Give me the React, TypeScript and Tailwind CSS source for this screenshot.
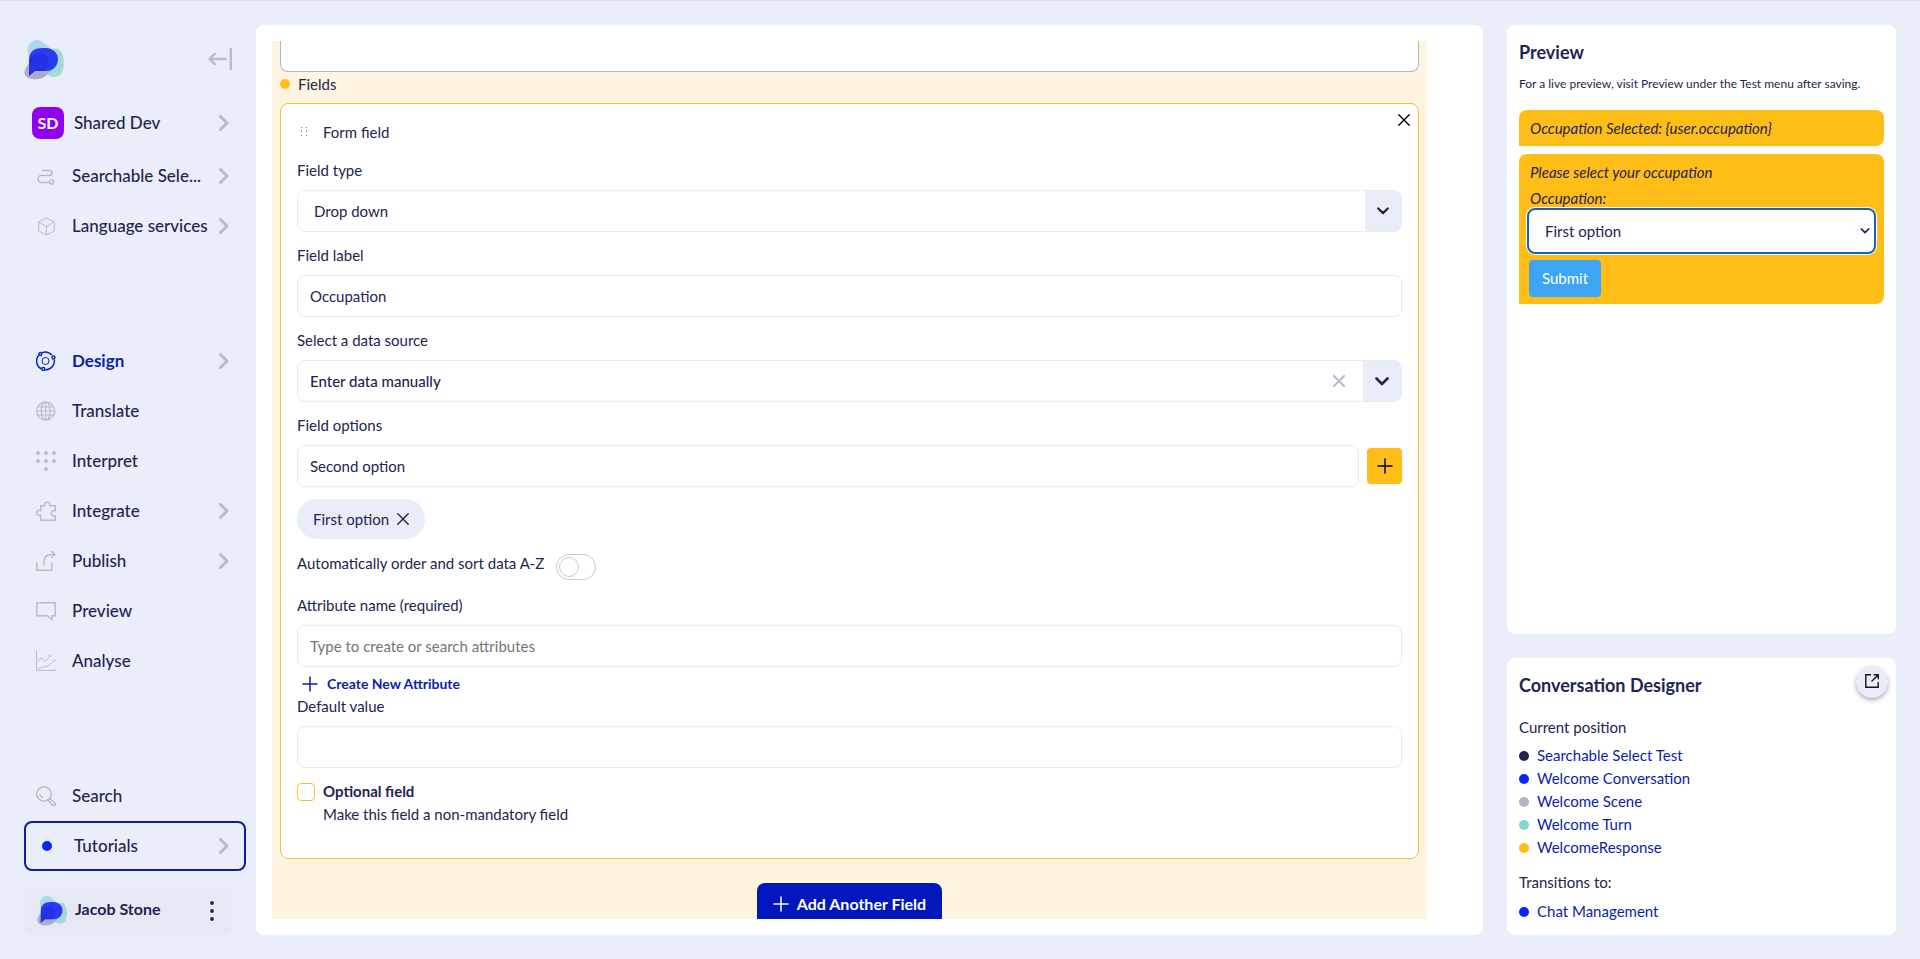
import React from "react";

type IconProps = { className?: string };

const Logo = ({ className }: IconProps) => (
  <svg viewBox="0 0 40 40" className={className} aria-hidden="true">
    <path d="M4 13C3 5 7 0 13 0c6 0 8 5 13 8 3 3 2 9-2 13-5 5-18 3-20-8z" fill="#a9d7f4" />
    <path d="M25 13c3-6 10-6 13 0 3 7 2 17-1 21-4 5-12 3-15-1-3-5-1-13 3-20z" fill="#a5d9d8" />
    <path d="M3 26c4-6 14-7 20-4 5 3 4 9 0 13-5 5-17 6-21 1-3-3-1-7 1-10z" fill="#adadc8" />
    <path d="M22 21c4-1 7 3 6 10l-6 1-2-3z" fill="#82b7be" />
    <path d="M5 36V20C5 12 10 8 18 8h4c7 0 12 5 12 11 0 7-5 12-12 12H11z" fill="#2a3bf2" />
    <path d="M5 21c2-6 6-8 12-7 6 0 9 5 7 12l-4 5h-9l-6 5z" fill="#1d28d8" opacity=".45" />
  </svg>
);

const Chevron = () => (
  <svg viewBox="0 0 10 16" className="h-4 w-[10px] shrink-0" fill="none" stroke="#b9bbcd" strokeWidth="3" aria-hidden="true">
    <path d="M1.5 1.500 8 8l-6.500 6.500" strokeLinecap="round" strokeLinejoin="round" />
  </svg>
);

const ChevronDown = ({ className }: IconProps) => (
  <svg viewBox="0 0 14 9" className={className} fill="none" stroke="#222451" strokeWidth="2.6" strokeLinecap="round" strokeLinejoin="round" aria-hidden="true">
    <path d="m1.5 1.5 5.5 5.5 5.5-5.5" />
  </svg>
);

const Cross = ({ className }: IconProps) => (
  <svg viewBox="0 0 12 12" className={className} fill="none" stroke="currentColor" strokeLinecap="round" aria-hidden="true">
    <path d="m.8.8 10.400 10.400M11.200.8.8 11.200" />
  </svg>
);

const Plus = ({ className }: IconProps) => (
  <svg viewBox="0 0 16 16" className={className} fill="none" stroke="currentColor" strokeLinecap="round" aria-hidden="true">
    <path d="M8 1v14M1 8h14" />
  </svg>
);

const icons: Record<string, React.ReactNode> = {
  scenario: (
    <>
      <path d="M5.500 4.500h8a2.500 2.500 0 0 1 0 5h-8a3.500 3.500 0 0 0 0 7H13" strokeWidth="1.5" />
      <circle cx="15.500" cy="16" r="2" strokeWidth="1.400" />
    </>
  ),
  cube: (
    <>
      <path d="m10.500 2 7.800 4v9l-7.800 4-7.800-4V6z" />
      <path d="m2.700 6 7.800 4.500L18.300 6M10.500 10.500V19" />
    </>
  ),
  design: (
    <g stroke="#0a2bb8">
      <circle cx="9.500" cy="10" r="3.500" strokeWidth="1" />
      <path d="M2.700 4.300A9 9 0 0 0 5.400 18M9.300 18.900A9 9 0 0 0 18.300 8.500M16 4.300A9 9 0 0 0 6 1.700" strokeWidth="1.500" />
      <circle cx="4.300" cy="3" r="1.500" strokeWidth="1.400" />
      <circle cx="17.500" cy="6.500" r="1.500" strokeWidth="1.400" />
      <circle cx="7.300" cy="18" r="1.500" strokeWidth="1.400" />
    </g>
  ),
  globe: (
    <>
      <circle cx="9.700" cy="10" r="9" strokeWidth="1.300" />
      <ellipse cx="9.700" cy="10" rx="4.500" ry="9" strokeWidth="1.200" />
      <path d="M.700 10h18M2 6h15.400M2 14h15.400M9.700 1v18" />
    </>
  ),
  dots: (
    <g fill="#b9bbcd" stroke="none">
      <circle cx="2" cy="2" r="2" />
      <circle cx="10" cy="2" r="2" />
      <circle cx="18" cy="2" r="2" />
      <circle cx="2" cy="10" r="2" />
      <circle cx="10" cy="10" r="2" />
      <circle cx="18" cy="10" r="2" />
      <circle cx="10" cy="18" r="2" />
    </g>
  ),
  puzzle: (
    <path
      d="M4.700 4.700h4c-.8-4.800 6-4.800 5.300 0h5.300v5c-5.500-1.500-5.500 6.500 0 5v4.600H4.700v-5c-5.400 1.400-5.400-6 0-4.800z"
      strokeWidth="1.400"
      strokeLinejoin="round"
    />
  ),
  publish: (
    <>
      <path d="M.8 11.500v7.700h15v-7.700" strokeWidth="1.500" />
      <path d="M8 14.500V11c0-5 3-7.500 7.500-7.500H19M15.300.2 19 3.500l-3.700 3.300" strokeWidth="1.500" />
    </>
  ),
  speech: <path d="M.8 1.800h18.400v13H16v3.700l-4.500-3.700H.8z" strokeWidth="1.500" />,
  chart: (
    <>
      <path d="M.6 0v19.400H20" />
      <path d="m1 11 4-4 4 3.500 5-5.500" strokeWidth=".900" />
      <path d="m2 17.500 5-1.500 4.500-.500L19 9" strokeWidth=".900" />
      <circle cx="14" cy="5" r=".600" />
      <circle cx="19" cy="9.500" r=".500" />
    </>
  ),
  search: (
    <>
      <circle cx="8" cy="8" r="7.200" strokeWidth="1.500" />
      <path d="M3.800 8a4.300 4.300 0 0 0 3.500 3.700" strokeWidth="1.200" />
      <path d="m12.200 14.500 1.800-1.800 5 4.300a1.500 1.500 0 0 1-2 2.300z" strokeWidth="1.400" />
    </>
  ),
};

const NavIcon = ({ name }: { name: string }) => (
  <svg viewBox="0 0 20 20" className="h-5 w-5 shrink-0" fill="none" stroke="#b9bbcd" aria-hidden="true">
    {icons[name]}
  </svg>
);

type NavItem = { label: string; icon: string; arrow?: boolean; active?: boolean };

const mainNav: NavItem[] = [
  { label: "Design", icon: "design", arrow: true, active: true },
  { label: "Translate", icon: "globe" },
  { label: "Interpret", icon: "dots" },
  { label: "Integrate", icon: "puzzle", arrow: true },
  { label: "Publish", icon: "publish", arrow: true },
  { label: "Preview", icon: "speech" },
  { label: "Analyse", icon: "chart" },
];

const NavRow = ({ label, icon, arrow, active }: NavItem) => (
  <a href="#" className="flex h-[50px] items-center pr-[27px] pl-9">
    <NavIcon name={icon} />
    <span
      className={`ml-4 flex-1 truncate text-[17px] ${
        active ? "font-bold text-[#0a1fb0]" : "font-medium"
      }`}
    >
      {label}
    </span>
    {arrow && <Chevron />}
  </a>
);

const Sidebar = () => (
  <aside className="flex w-64 shrink-0 flex-col justify-between">
    <div>
      <div className="flex h-[73px] items-start justify-between pt-[15px] pr-6 pl-6">
        <Logo className="h-10 w-10" />
        <button aria-label="Collapse menu" className="mt-2">
          <svg viewBox="0 0 24 22" className="h-[22px] w-6" fill="none" stroke="#b9bbcd" strokeWidth="2.400">
            <path d="M19 11H1.500M7.500 5l-6 6 6 6" strokeLinejoin="round" />
            <path d="M22.800 0v22" />
          </svg>
        </button>
      </div>
      <a href="#" className="mb-[3px] flex h-[50px] items-center pr-[27px] pl-8">
        <span className="flex h-8 w-8 items-center justify-center rounded-lg bg-[#9100ee] text-base font-bold text-white">
          SD
        </span>
        <span className="ml-[10px] flex-1 text-[17px] font-medium">Shared Dev</span>
        <Chevron />
      </a>
      <NavRow label="Searchable Sele..." icon="scenario" arrow />
      <NavRow label="Language services" icon="cube" arrow />
    </div>
    <nav>
      {mainNav.map((item) => (
        <NavRow key={item.label} {...item} />
      ))}
    </nav>
    <div>
      <NavRow label="Search" icon="search" />
      <a
        href="#"
        className="mr-[10px] ml-6 flex h-[50px] items-center rounded-lg border-2 border-[#0a1fa0] pr-[15px] pl-4"
      >
        <span className="h-[10px] w-[10px] rounded-full bg-[#0527ff]"></span>
        <span className="ml-[22px] flex-1 text-[17px] font-medium">Tutorials</span>
        <Chevron />
      </a>
      <div className="mt-4 mr-6 ml-6 flex h-12 items-center rounded-lg bg-[#e4e9f4] pr-[18px] pl-[13px]">
        <Logo className="h-[30px] w-[30px]" />
        <span className="ml-2 flex-1 pb-1 text-base font-bold">Jacob Stone</span>
        <button aria-label="User menu">
          <svg viewBox="0 0 4 20" className="h-5 w-1" fill="#222451">
            <circle cx="2" cy="2" r="1.900" />
            <circle cx="2" cy="10" r="1.900" />
            <circle cx="2" cy="18" r="1.900" />
          </svg>
        </button>
      </div>
    </div>
  </aside>
);

const Label = ({ htmlFor, children }: { htmlFor: string; children: React.ReactNode }) => (
  <label htmlFor={htmlFor} className="mb-2 block text-[15px] leading-[23px]">
    {children}
  </label>
);

const FormField = () => (
  <section className="rounded-lg border border-[#f2c230] bg-white px-4 pt-4 pb-8">
    <div className="mb-[15px] flex h-6 items-center">
      <svg viewBox="0 0 6 10" className="ml-1 h-[10px] w-[6px]" fill="#6b6e8d" aria-hidden="true">
        <path d="M0 0h1v1H0zM5 0h1v1H5zM0 4h1v1H0zM5 4h1v1H5zM0 8h1v1H0zM5 8h1v1H5z" />
      </svg>
      <h2 className="ml-4 flex-1 text-[15px]">Form field</h2>
      <button aria-label="Remove field" className="-mt-6 -mr-2 text-black">
        <Cross className="h-3 w-3 stroke-[1.4]" />
      </button>
    </div>

    <Label htmlFor="field-type">Field type</Label>
    <div className="mb-3 flex h-[42px] overflow-hidden rounded-lg border border-[#e9ebf1]">
      <select id="field-type" className="flex-1 appearance-none bg-white px-4 text-[15px] outline-none">
        <option>Drop down</option>
      </select>
      <span className="flex w-9 items-center justify-center bg-[#e9edfa]">
        <ChevronDown className="h-2 w-3" />
      </span>
    </div>

    <Label htmlFor="field-label">Field label</Label>
    <input
      id="field-label"
      defaultValue="Occupation"
      className="mb-3 block h-[42px] w-full rounded-lg border border-[#e9ebf1] px-3 text-[15px]"
    />

    <Label htmlFor="data-source">Select a data source</Label>
    <div className="mb-3 flex h-[42px] items-center overflow-hidden rounded-lg border border-[#e9ebf1]">
      <input
        id="data-source"
        defaultValue="Enter data manually"
        className="h-full min-w-0 flex-1 px-3 text-[15px] font-medium"
      />
      <button aria-label="Clear data source" className="mr-[18px] text-[#b9bbcd]">
        <Cross className="h-3 w-3 stroke-2" />
      </button>
      <button aria-label="Show data sources" className="flex h-full w-[38px] items-center justify-center bg-[#e9edfa]">
        <ChevronDown className="h-[9px] w-[14px]" />
      </button>
    </div>

    <Label htmlFor="field-options">Field options</Label>
    <div className="mb-3 flex items-center gap-2">
      <input
        id="field-options"
        defaultValue="Second option"
        className="h-[42px] min-w-0 flex-1 rounded-lg border border-[#e9ebf1] px-3 text-[15px]"
      />
      <button
        aria-label="Add option"
        className="flex h-9 w-[35px] items-center justify-center rounded-sm bg-[#ffbe17] text-black"
      >
        <Plus className="h-4 w-4 stroke-[1.5]" />
      </button>
    </div>
    <div className="inline-flex h-10 items-center gap-2 rounded-full bg-[#e9edfa] px-4 text-[15px]">
      First option
      <button aria-label="Remove First option">
        <Cross className="h-3 w-3 stroke-[1.4]" />
      </button>
    </div>

    <div className="mt-[15px] mb-[14px] flex items-start gap-3">
      <label htmlFor="auto-sort" className="text-[15px] leading-[18px]">
        Automatically order and sort data A-Z
      </label>
      <span className="flex h-[26px] w-10 items-center rounded-full border border-[#c8cad3] px-[2px]">
        <input
          id="auto-sort"
          type="checkbox"
          role="switch"
          className="h-5 w-5 appearance-none rounded-full border border-[#c8cad3]"
        />
      </span>
    </div>

    <Label htmlFor="attribute-name">Attribute name (required)</Label>
    <input
      id="attribute-name"
      placeholder="Type to create or search attributes"
      className="block h-[42px] w-full rounded-lg border border-[#e9ebf1] px-3 text-[15px] placeholder:text-[#757575]"
    />
    <button className="mt-[6px] ml-[5px] flex h-[22px] items-center gap-[9px] text-sm font-bold text-[#0a1fb0]">
      <Plus className="h-4 w-4 stroke-[1.5]" />
      Create New Attribute
    </button>

    <Label htmlFor="default-value">Default value</Label>
    <input
      id="default-value"
      className="mb-3 block h-[42px] w-full rounded-lg border border-[#e9ebf1] px-3 text-[15px]"
    />

    <div className="flex gap-2">
      <input
        id="optional"
        type="checkbox"
        className="mt-[3px] h-[18px] w-[18px] appearance-none rounded border border-[#f2c230]"
      />
      <label htmlFor="optional" className="text-[15px] leading-[23px]">
        <span className="block font-bold">Optional field</span>
        <span className="block">Make this field a non-mandatory field</span>
      </label>
    </div>
  </section>
);

const Editor = () => (
  <main className="min-w-0 flex-1 rounded-lg bg-white p-4">
    <div className="mr-10 h-full overflow-hidden bg-[#fff4e0] px-2">
      <textarea
        aria-label="Message"
        className="block h-[31px] w-full resize-none rounded-b-lg border border-t-0 border-[#b5b3ca] bg-white"
      />
      <div className="mb-[7px] flex h-6 items-center gap-2 text-[15px]">
        <span className="h-[10px] w-[10px] rounded-full bg-[#ffbe17]"></span>
        Fields
      </div>
      <FormField />
      <button className="mx-auto mt-6 flex h-[42px] items-center gap-2 rounded-lg bg-[#0017bd] px-4 text-base font-bold text-white">
        <Plus className="h-4 w-4 stroke-[1.5]" />
        Add Another Field
      </button>
    </div>
  </main>
);

const Preview = () => (
  <section className="min-h-0 flex-1 rounded-lg bg-white px-3 pt-[15px]">
    <h2 className="text-lg leading-6 font-bold">Preview</h2>
    <p className="mt-[11px] text-xs leading-[18px]">
      For a live preview, visit Preview under the Test menu after saving.
    </p>
    <p className="mt-[17px] flex h-9 items-center rounded-tl-lg rounded-r-lg bg-[#ffbe17] px-[11px] text-[15px] italic">
      Occupation Selected: {"{user.occupation}"}
    </p>
    <div className="mt-2 rounded-tl-lg rounded-r-lg bg-[#ffbe17] px-2 pt-[7px] pb-[7px] text-[15px]">
      <p className="mb-[5px] px-[3px] leading-[22px] italic">Please select your occupation</p>
      <label htmlFor="occupation" className="block px-[3px] leading-5 italic">
        Occupation:
      </label>
      <div className="flex h-[46px] items-center rounded-lg border-2 border-[#1a5fb8] bg-white pr-1 ring-1 ring-white">
        <select id="occupation" className="h-full min-w-0 flex-1 appearance-none bg-transparent px-4 outline-none">
          <option>First option</option>
        </select>
        <ChevronDown className="h-[6px] w-[10px]" />
      </div>
      <button className="mt-[6px] ml-[2px] flex h-[37px] w-[72px] items-center justify-center rounded-sm bg-[#3da5f4] text-white">
        Submit
      </button>
    </div>
  </section>
);

const positions = [
  { label: "Searchable Select Test", dot: "bg-[#222451]" },
  { label: "Welcome Conversation", dot: "bg-[#0527ff]" },
  { label: "Welcome Scene", dot: "bg-[#b5b3ca]" },
  { label: "Welcome Turn", dot: "bg-[#80d8d0]" },
  { label: "WelcomeResponse", dot: "bg-[#ffbe17]" },
];

const transitions = [{ label: "Chat Management", dot: "bg-[#0527ff]" }];

const LinkList = ({ items }: { items: { label: string; dot: string }[] }) => (
  <ul className="mt-[6px]">
    {items.map((item) => (
      <li key={item.label} className="flex h-[23px] items-center gap-2">
        <span className={`h-[10px] w-[10px] rounded-full ${item.dot}`}></span>
        <a href="#" className="text-[15px] text-[#0a1fa8]">
          {item.label}
        </a>
      </li>
    ))}
  </ul>
);

const Designer = () => (
  <section className="rounded-lg bg-white pt-2 pr-2 pb-3 pl-3">
    <div className="flex items-start justify-between">
      <h2 className="mt-[7px] text-lg leading-6 font-bold">Conversation Designer</h2>
      <button
        aria-label="Open designer"
        className="flex h-8 w-8 items-center justify-center rounded-full bg-[#eaedf9] pb-[2px] shadow-[0_2px_4px_rgba(40,40,90,0.4)]"
      >
        <svg viewBox="0 0 14 14" className="h-[14px] w-[14px]" fill="none" stroke="#111326" strokeWidth="1.400">
          <path d="M6 .8H.8v12.400h12.400V8M8.700.8h4.500v4.500M13 1 6.500 7.500" />
        </svg>
      </button>
    </div>
    <h3 className="mt-[18px] text-[15px] leading-[22px]">Current position</h3>
    <LinkList items={positions} />
    <h3 className="mt-3 text-[15px] leading-[23px]">Transitions to:</h3>
    <LinkList items={transitions} />
  </section>
);

const App = () => {
  return (
    <div className="flex h-screen border-t border-[#dcdfe5] bg-[#eaedfa] pt-6 pr-6 pb-6 font-['Lato','Liberation_Sans',sans-serif] text-[#222451]">
      <Sidebar />
      <Editor />
      <div className="ml-6 flex w-[389px] shrink-0 flex-col gap-6">
        <Preview />
        <Designer />
      </div>
    </div>
  );
};

export default App;
